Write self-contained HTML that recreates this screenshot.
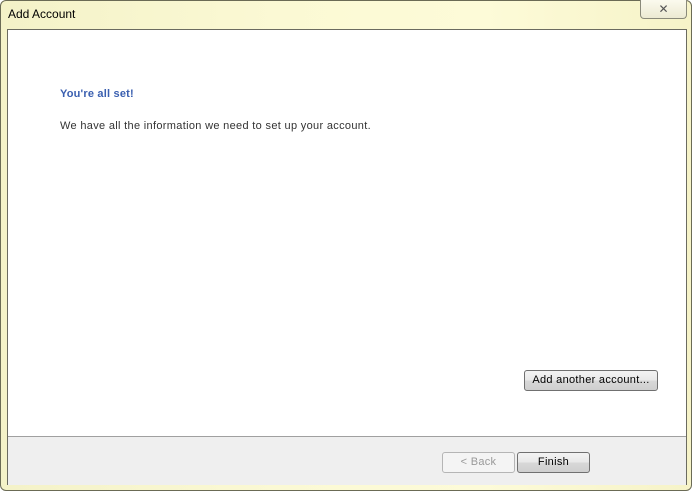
<!DOCTYPE html>
<html><head><style>
body{margin:0;width:692px;height:491px;overflow:hidden;font-family:"Liberation Sans",sans-serif;}
.frame{position:absolute;left:0;top:0;width:690px;height:489px;border:1px solid #6b6b55;border-radius:6px;background:linear-gradient(90deg,#f4f2c8 0%,#fbf9d4 40%,#fdfbd8 70%,#f6f3c8 100%);}
.title{position:absolute;left:8px;top:7px;font-size:12px;color:#000;}
.close{position:absolute;left:640px;top:0;width:45px;height:18px;border:1px solid #8a8a7a;border-top:none;border-radius:0 0 4px 4px;background:linear-gradient(#fbfaee,#ecead2);font-size:12px;text-align:center;line-height:18px;color:#555;}
.panel{position:absolute;left:7px;top:29px;width:678px;height:454px;border:1px solid #6b6b60;background:#fff;}
.footer{position:absolute;left:0;top:406px;width:678px;height:48px;background:#efefef;border-top:1px solid #a0a0a0;}
.h{position:absolute;left:52px;top:58px;font-size:11px;font-weight:bold;color:#3a5fb0;letter-spacing:0.2px;}
.t{position:absolute;left:52px;top:90px;font-size:11px;color:#333;letter-spacing:0.32px;}
.btn{position:absolute;height:19px;border:1px solid #707070;border-radius:3px;background:linear-gradient(#f3f3f3 0%,#e8e8e8 50%,#d8d8d8 51%,#cfcfcf 100%);font-size:11px;color:#000;text-align:center;line-height:19px;box-sizing:content-box;letter-spacing:0.3px;}
</style></head><body>
<div class="frame"></div>
<div class="title">Add Account</div>
<div class="close">✕</div>
<div class="panel">
<div class="h">You're all set!</div>
<div class="t">We have all the information we need to set up your account.</div>
<div class="btn" style="left:516px;top:340px;width:132px;">Add another account...</div>
<div class="footer">
<div class="btn" style="left:434px;top:15px;width:71px;border-color:#b5b5b5;background:#f4f4f4;color:#999;">&lt; Back</div>
<div class="btn" style="left:509px;top:15px;width:71px;">Finish</div>
</div>
</div>
</body></html>
